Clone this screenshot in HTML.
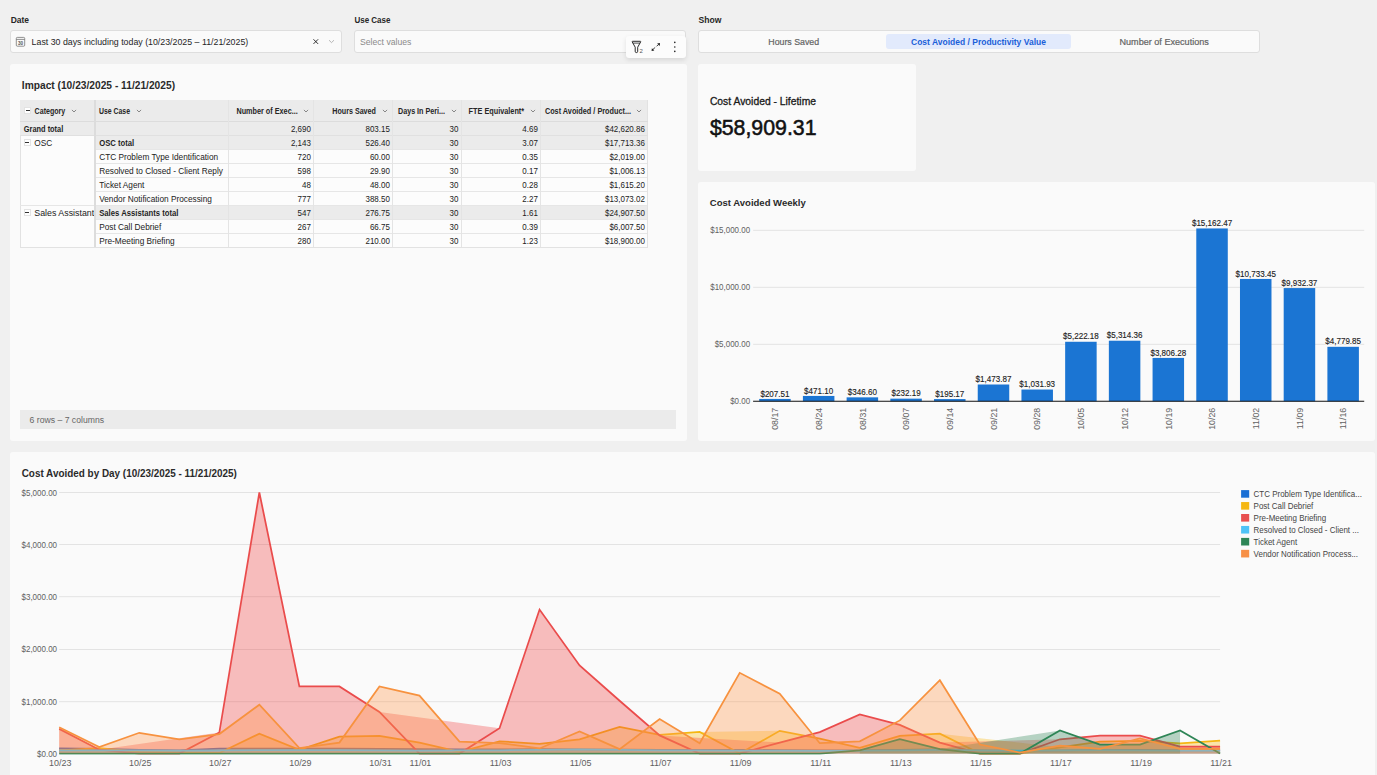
<!DOCTYPE html><html><head><meta charset="utf-8"><style>
*{margin:0;padding:0;box-sizing:border-box}
html,body{width:1377px;height:775px;overflow:hidden;background:#f0f0f0;font-family:"Liberation Sans", sans-serif;color:#1f1f1f}
.a{position:absolute}
.card{position:absolute;background:#fafafa;border-radius:3px}
.box{position:absolute;background:#fafafa;border:1px solid #dedede;border-radius:3px}
svg text{font-family:"Liberation Sans", sans-serif}
</style></head><body>
<div class="box" style="left:9.6px;top:30px;width:332.9px;height:22.6px;"></div>
<svg class="a" style="left:15px;top:36px" width="11" height="11" viewBox="0 0 11 11">
<rect x="1.3" y="1.4" width="8.4" height="8.8" rx="1" fill="none" stroke="#6e6e6e" stroke-width="0.75"/>
<line x1="1.3" y1="3.4" x2="9.7" y2="3.4" stroke="#6e6e6e" stroke-width="0.75"/>
<text x="5.5" y="8.9" font-size="4.6" font-weight="bold" text-anchor="middle" fill="#555">30</text>
</svg>
<svg class="a" style="left:312px;top:37.5px" width="8" height="8" viewBox="0 0 8 8">
<path d="M1.5 1.3 L6.1 5.9 M6.1 1.3 L1.5 5.9" stroke="#1a1a1a" stroke-width="0.9"/></svg>
<svg class="a" style="left:328.3px;top:38.9px" width="7" height="5" viewBox="0 0 7 5">
<path d="M1 1.2 L3.5 3.6 L6 1.2" stroke="#9a9a9a" stroke-width="0.7" fill="none"/></svg>
<div class="box" style="left:353.6px;top:30px;width:332.4px;height:22.6px;"></div>
<div class="box" style="left:698px;top:30px;width:562px;height:22.6px;"></div>
<div class="a" style="left:886px;top:34px;width:185px;height:15px;background:#e2eafc;border-radius:3px;"></div>
<div class="card" style="left:10px;top:64px;width:677px;height:376.5px;"></div>
<div class="card" style="left:698px;top:64px;width:218px;height:107px;border-radius:3px;"></div>
<div class="card" style="left:698px;top:182px;width:677px;height:258.5px;"></div>
<div class="card" style="left:10px;top:452px;width:1365px;height:340px;"></div>
<div class="a" style="left:626px;top:36px;width:60px;height:22px;background:#fcfcfc;border-radius:3px;box-shadow:0 2px 5px rgba(0,0,0,0.11);"></div>
<svg class="a" style="left:628px;top:38px" width="58" height="18" viewBox="0 0 58 18">
<path d="M4.6 3.3 H12.3 Q12.9 3.3 12.7 3.9 L9.7 9.2 V13.3 Q9.7 14.6 8.45 14.6 Q7.2 14.6 7.2 13.3 V9.2 L4.2 3.9 Q4.0 3.3 4.6 3.3 Z" fill="none" stroke="#1f1f1f" stroke-width="0.95" stroke-linejoin="round"/>
<line x1="4.9" y1="5.1" x2="12.0" y2="5.1" stroke="#1f1f1f" stroke-width="0.8"/>
<text x="11.6" y="15.3" font-size="6" fill="#555">2</text>
<path d="M24.8 11.6 L27.2 9.4 M28.6 8.2 L30.5 6.6" stroke="#1f1f1f" stroke-width="0.85"/>
<path d="M23.6 12.9 L23.9 10.3 L26.3 12.6 Z" fill="#1f1f1f"/>
<path d="M32.0 5.1 L31.7 8.0 L29.1 5.4 Z" fill="#1f1f1f"/>
<circle cx="46.8" cy="4.4" r="0.8" fill="#222"/><circle cx="46.8" cy="9.0" r="0.8" fill="#222"/><circle cx="46.8" cy="13.4" r="0.8" fill="#222"/>
</svg>
<div class="a" style="left:20px;top:100px;width:627.5px;height:21.3px;background:#ebebeb;"></div>
<div class="a" style="left:20px;top:121.3px;width:627.5px;height:14px;background:#ebebeb;"></div>
<div class="a" style="left:96px;top:135.3px;width:551.5px;height:14px;background:#ebebeb;"></div>
<div class="a" style="left:96px;top:149.3px;width:551.5px;height:14px;background:#fcfcfc;"></div>
<div class="a" style="left:96px;top:163.3px;width:551.5px;height:14px;background:#fcfcfc;"></div>
<div class="a" style="left:96px;top:177.3px;width:551.5px;height:14px;background:#fcfcfc;"></div>
<div class="a" style="left:96px;top:191.3px;width:551.5px;height:14px;background:#fcfcfc;"></div>
<div class="a" style="left:96px;top:205.3px;width:551.5px;height:14px;background:#ebebeb;"></div>
<div class="a" style="left:96px;top:219.3px;width:551.5px;height:14px;background:#fcfcfc;"></div>
<div class="a" style="left:96px;top:233.3px;width:551.5px;height:14px;background:#fcfcfc;"></div>
<div class="a" style="left:20px;top:135.3px;width:74px;height:112px;background:#fcfcfc;border-left:1px solid #e2e2e2;"></div>
<div class="a" style="left:96px;top:148.8px;width:551.5px;height:1px;background:#e6e6e6;"></div>
<div class="a" style="left:96px;top:162.8px;width:551.5px;height:1px;background:#e6e6e6;"></div>
<div class="a" style="left:96px;top:176.8px;width:551.5px;height:1px;background:#e6e6e6;"></div>
<div class="a" style="left:96px;top:190.8px;width:551.5px;height:1px;background:#e6e6e6;"></div>
<div class="a" style="left:96px;top:204.8px;width:551.5px;height:1px;background:#e6e6e6;"></div>
<div class="a" style="left:96px;top:218.8px;width:551.5px;height:1px;background:#e6e6e6;"></div>
<div class="a" style="left:96px;top:232.8px;width:551.5px;height:1px;background:#e6e6e6;"></div>
<div class="a" style="left:96px;top:246.8px;width:551.5px;height:1px;background:#e6e6e6;"></div>
<div class="a" style="left:20px;top:204.8px;width:74px;height:1px;background:#e6e6e6;"></div>
<div class="a" style="left:20px;top:246.8px;width:627.5px;height:1px;background:#e2e2e2;"></div>
<div class="a" style="left:647px;top:100px;width:1px;height:147.3px;background:#e2e2e2;"></div>
<div class="a" style="left:20px;top:120.8px;width:627.5px;height:1px;background:#dcdcdc;"></div>
<div class="a" style="left:20px;top:134.8px;width:627.5px;height:1px;background:#e0e0e0;"></div>
<div class="a" style="left:94px;top:100px;width:2px;height:147.3px;background:#dcdcdc;"></div>
<div class="a" style="left:228.0px;top:100px;width:1px;height:147.3px;background:#e4e4e4;"></div>
<div class="a" style="left:313.0px;top:100px;width:1px;height:147.3px;background:#e4e4e4;"></div>
<div class="a" style="left:392.0px;top:100px;width:1px;height:147.3px;background:#e4e4e4;"></div>
<div class="a" style="left:460.5px;top:100px;width:1px;height:147.3px;background:#e4e4e4;"></div>
<div class="a" style="left:540.0px;top:100px;width:1px;height:147.3px;background:#e4e4e4;"></div>
<div class="a" style="left:24px;top:107px;width:7px;height:7px;background:#fff;border:0.5px solid #e3e3e3;"></div>
<div class="a" style="left:25.5px;top:110.2px;width:4px;height:0.9px;background:#333;"></div>
<svg class="a" style="left:70.7px;top:109px" width="6" height="4" viewBox="0 0 6 4"><path d="M0.9 0.9 L3 3 L5.1 0.9" stroke="#666" stroke-width="0.75" fill="none"/></svg>
<svg class="a" style="left:135.5px;top:109px" width="6" height="4" viewBox="0 0 6 4"><path d="M0.9 0.9 L3 3 L5.1 0.9" stroke="#666" stroke-width="0.75" fill="none"/></svg>
<svg class="a" style="left:303px;top:109px" width="6" height="4" viewBox="0 0 6 4"><path d="M0.9 0.9 L3 3 L5.1 0.9" stroke="#666" stroke-width="0.75" fill="none"/></svg>
<svg class="a" style="left:381.6px;top:109px" width="6" height="4" viewBox="0 0 6 4"><path d="M0.9 0.9 L3 3 L5.1 0.9" stroke="#666" stroke-width="0.75" fill="none"/></svg>
<svg class="a" style="left:450.7px;top:109px" width="6" height="4" viewBox="0 0 6 4"><path d="M0.9 0.9 L3 3 L5.1 0.9" stroke="#666" stroke-width="0.75" fill="none"/></svg>
<svg class="a" style="left:529.5px;top:109px" width="6" height="4" viewBox="0 0 6 4"><path d="M0.9 0.9 L3 3 L5.1 0.9" stroke="#666" stroke-width="0.75" fill="none"/></svg>
<svg class="a" style="left:636.3px;top:109px" width="6" height="4" viewBox="0 0 6 4"><path d="M0.9 0.9 L3 3 L5.1 0.9" stroke="#666" stroke-width="0.75" fill="none"/></svg>
<div class="a" style="left:23.5px;top:138.8px;width:7px;height:7px;background:#fff;border:0.5px solid #e3e3e3;"></div>
<div class="a" style="left:25px;top:142.0px;width:4px;height:0.9px;background:#333;"></div>
<div class="a" style="left:23.5px;top:208.8px;width:7px;height:7px;background:#fff;border:0.5px solid #e3e3e3;"></div>
<div class="a" style="left:25px;top:212.0px;width:4px;height:0.9px;background:#333;"></div>
<div class="a" style="left:20px;top:410px;width:656px;height:19px;background:#ebebeb;"></div>
<svg class="a" style="left:0;top:0" width="1377" height="775" viewBox="0 0 1377 775">
<line x1="753.1" y1="230.30" x2="1364.2" y2="230.30" stroke="#e3e3e3" stroke-width="1"/>
<line x1="753.1" y1="287.30" x2="1364.2" y2="287.30" stroke="#e3e3e3" stroke-width="1"/>
<line x1="753.1" y1="344.30" x2="1364.2" y2="344.30" stroke="#e3e3e3" stroke-width="1"/>
<rect x="759.20" y="398.93" width="31.5" height="2.37" fill="#1b75d3"/>
<rect x="802.91" y="395.93" width="31.5" height="5.37" fill="#1b75d3"/>
<rect x="846.62" y="397.35" width="31.5" height="3.95" fill="#1b75d3"/>
<rect x="890.33" y="398.65" width="31.5" height="2.65" fill="#1b75d3"/>
<rect x="934.03" y="399.08" width="31.5" height="2.22" fill="#1b75d3"/>
<rect x="977.74" y="384.50" width="31.5" height="16.80" fill="#1b75d3"/>
<rect x="1021.45" y="389.54" width="31.5" height="11.76" fill="#1b75d3"/>
<rect x="1065.15" y="341.77" width="31.5" height="59.53" fill="#1b75d3"/>
<rect x="1108.86" y="340.72" width="31.5" height="60.58" fill="#1b75d3"/>
<rect x="1152.57" y="357.91" width="31.5" height="43.39" fill="#1b75d3"/>
<rect x="1196.28" y="228.45" width="31.5" height="172.85" fill="#1b75d3"/>
<rect x="1239.98" y="278.94" width="31.5" height="122.36" fill="#1b75d3"/>
<rect x="1283.69" y="288.07" width="31.5" height="113.23" fill="#1b75d3"/>
<rect x="1327.40" y="346.81" width="31.5" height="54.49" fill="#1b75d3"/>
<line x1="753.1" y1="401.3" x2="1364.2" y2="401.3" stroke="#111" stroke-width="1.1"/>
</svg>
<svg class="a" style="left:0;top:0" width="1377" height="775" viewBox="0 0 1377 775">
<line x1="59.2" y1="492.5" x2="1220.1" y2="492.5" stroke="#e3e3e3" stroke-width="1"/>
<line x1="59.2" y1="544.5" x2="1220.1" y2="544.5" stroke="#e3e3e3" stroke-width="1"/>
<line x1="59.2" y1="596.7" x2="1220.1" y2="596.7" stroke="#e3e3e3" stroke-width="1"/>
<line x1="59.2" y1="649.5" x2="1220.1" y2="649.5" stroke="#e3e3e3" stroke-width="1"/>
<line x1="59.2" y1="701.7" x2="1220.1" y2="701.7" stroke="#e3e3e3" stroke-width="1"/>
<defs><clipPath id="dclip"><rect x="50" y="470" width="1180" height="284.7"/></clipPath></defs><g clip-path="url(#dclip)">
<path d="M59.20,753.50 L59.20,748.38 L99.23,748.80 L139.26,749.85 L179.29,750.37 L219.32,748.54 L259.35,748.54 L299.38,748.54 L339.41,748.54 L379.44,748.80 L419.47,749.06 L459.50,749.32 L499.53,749.32 L539.56,749.06 L579.59,749.32 L619.62,749.59 L659.65,749.85 L699.68,749.85 L739.71,749.85 L779.74,750.11 L819.77,750.37 L859.80,750.37 L899.83,749.85 L939.86,749.32 L979.89,750.37 L1019.92,750.89 L1059.95,750.37 L1099.98,749.85 L1140.01,749.85 L1180.04,750.37 L1220.07,750.37 L1220.07,753.50 Z" fill="#1a6fd4" fill-opacity="0.34"/>
<path d="M59.20,748.38 L99.23,748.80 L139.26,749.85 L179.29,750.37 L219.32,748.54 L259.35,748.54 L299.38,748.54 L339.41,748.54 L379.44,748.80 L419.47,749.06 L459.50,749.32 L499.53,749.32 L539.56,749.06 L579.59,749.32 L619.62,749.59 L659.65,749.85 L699.68,749.85 L739.71,749.85 L779.74,750.11 L819.77,750.37 L859.80,750.37 L899.83,749.85 L939.86,749.32 L979.89,750.37 L1019.92,750.89 L1059.95,750.37 L1099.98,749.85 L1140.01,749.85 L1180.04,750.37 L1220.07,750.37" fill="none" stroke="#1a6fd4" stroke-width="1.75" stroke-linejoin="miter"/>
<path d="M59.20,753.50 L59.20,750.37 L99.23,748.02 L139.26,751.93 L179.29,752.46 L219.32,752.98 L259.35,733.72 L299.38,749.74 L339.41,736.69 L379.44,735.80 L419.47,742.59 L459.50,751.73 L499.53,741.29 L539.56,743.90 L579.59,739.30 L619.62,726.93 L659.65,734.76 L699.68,731.89 L779.74,730.85 L819.77,738.68 L859.80,747.81 L899.83,735.80 L939.86,733.72 L1059.95,747.29 L1099.98,741.70 L1140.01,740.92 L1180.04,743.27 L1220.07,740.55 L1220.07,753.50 Z" fill="#f9b80e" fill-opacity="0.34"/>
<path d="M59.20,750.37 L99.23,748.02 L139.26,751.93 L179.29,752.46 L219.32,752.98 L259.35,733.72 L299.38,749.74 L339.41,736.69 L379.44,735.80 L419.47,742.59 L459.50,751.73 L499.53,741.29 L539.56,743.90 L579.59,739.30 L619.62,726.93 L659.65,734.76 L699.68,731.89 L739.71,753.50 L779.74,730.85 L819.77,738.68 L859.80,747.81 L899.83,735.80 L939.86,733.72 L979.89,753.50 L1019.92,753.50 L1059.95,747.29 L1099.98,741.70 L1140.01,740.92 L1180.04,743.27 L1220.07,740.55" fill="none" stroke="#f5b713" stroke-width="1.75" stroke-linejoin="miter"/>
<path d="M59.20,753.50 L59.20,728.86 L99.23,749.74 L219.32,732.52 L259.35,492.50 L299.38,686.48 L339.41,686.48 L379.44,711.90 L499.53,728.24 L539.56,609.53 L579.59,665.49 L619.62,700.78 L659.65,735.39 L779.74,742.59 L819.77,732.15 L859.80,714.51 L899.83,724.95 L939.86,742.59 L1059.95,739.30 L1099.98,735.65 L1140.01,735.65 L1180.04,746.51 L1220.07,746.51 L1220.07,753.50 Z" fill="#f14444" fill-opacity="0.34"/>
<path d="M59.20,728.86 L99.23,749.74 L139.26,753.50 L179.29,753.50 L219.32,732.52 L259.35,492.50 L299.38,686.48 L339.41,686.48 L379.44,711.90 L419.47,753.50 L459.50,753.50 L499.53,728.24 L539.56,609.53 L579.59,665.49 L619.62,700.78 L659.65,735.39 L699.68,753.50 L739.71,753.50 L779.74,742.59 L819.77,732.15 L859.80,714.51 L899.83,724.95 L939.86,742.59 L979.89,753.50 L1019.92,753.50 L1059.95,739.30 L1099.98,735.65 L1140.01,735.65 L1180.04,746.51 L1220.07,746.51" fill="none" stroke="#ea4c4c" stroke-width="1.75" stroke-linejoin="miter"/>
<path d="M59.20,753.50 L59.20,750.37 L99.23,750.26 L139.26,750.47 L179.29,750.63 L219.32,750.37 L259.35,750.11 L299.38,750.11 L339.41,750.11 L379.44,750.37 L419.47,750.63 L459.50,750.47 L499.53,750.26 L539.56,749.85 L579.59,749.32 L619.62,749.85 L659.65,750.26 L699.68,750.47 L739.71,750.63 L779.74,750.63 L819.77,750.79 L859.80,750.63 L899.83,750.26 L939.86,749.95 L979.89,750.26 L1019.92,750.63 L1059.95,750.37 L1099.98,750.05 L1140.01,750.37 L1180.04,750.63 L1220.07,750.63 L1220.07,753.50 Z" fill="#4fc3f7" fill-opacity="0.34"/>
<path d="M59.20,750.37 L99.23,750.26 L139.26,750.47 L179.29,750.63 L219.32,750.37 L259.35,750.11 L299.38,750.11 L339.41,750.11 L379.44,750.37 L419.47,750.63 L459.50,750.47 L499.53,750.26 L539.56,749.85 L579.59,749.32 L619.62,749.85 L659.65,750.26 L699.68,750.47 L739.71,750.63 L779.74,750.63 L819.77,750.79 L859.80,750.63 L899.83,750.26 L939.86,749.95 L979.89,750.26 L1019.92,750.63 L1059.95,750.37 L1099.98,750.05 L1140.01,750.37 L1180.04,750.63 L1220.07,750.63" fill="none" stroke="#4fc3f7" stroke-width="1.75" stroke-linejoin="miter"/>
<path d="M859.80,753.50 L859.80,750.42 L899.83,739.04 L939.86,749.12 L1059.95,730.53 L1099.98,744.57 L1140.01,744.57 L1180.04,730.53 L1180.04,753.50 Z" fill="#2e8556" fill-opacity="0.34"/>
<path d="M59.20,753.50 L99.23,753.50 L139.26,753.50 L179.29,753.50 L219.32,753.50 L259.35,753.50 L299.38,753.50 L339.41,753.50 L379.44,753.50 L419.47,753.50 L459.50,753.50 L499.53,753.50 L539.56,753.50 L579.59,753.50 L619.62,753.50 L659.65,753.50 L699.68,753.50 L739.71,753.50 L779.74,753.50 L819.77,753.50 L859.80,750.42 L899.83,739.04 L939.86,749.12 L979.89,753.50 L1019.92,753.50 L1059.95,730.53 L1099.98,744.57 L1140.01,744.57 L1180.04,730.53 L1220.07,753.50" fill="none" stroke="#2e8556" stroke-width="1.75" stroke-linejoin="miter"/>
<path d="M59.20,753.50 L59.20,727.24 L99.23,747.13 L139.26,732.78 L179.29,739.30 L219.32,734.08 L259.35,704.75 L299.38,748.07 L339.41,742.59 L379.44,686.48 L419.47,695.61 L459.50,741.55 L499.53,743.06 L539.56,748.44 L579.59,731.47 L619.62,749.12 L659.65,719.10 L699.68,743.22 L739.71,672.80 L779.74,693.63 L819.77,743.22 L859.80,741.29 L899.83,720.41 L939.86,680.21 L979.89,744.52 L1019.92,752.56 L1059.95,745.67 L1099.98,748.85 L1140.01,738.52 L1180.04,748.85 L1220.07,748.85 L1220.07,753.50 Z" fill="#ff9649" fill-opacity="0.34"/>
<path d="M59.20,727.24 L99.23,747.13 L139.26,732.78 L179.29,739.30 L219.32,734.08 L259.35,704.75 L299.38,748.07 L339.41,742.59 L379.44,686.48 L419.47,695.61 L459.50,741.55 L499.53,743.06 L539.56,748.44 L579.59,731.47 L619.62,749.12 L659.65,719.10 L699.68,743.22 L739.71,672.80 L779.74,693.63 L819.77,743.22 L859.80,741.29 L899.83,720.41 L939.86,680.21 L979.89,744.52 L1019.92,752.56 L1059.95,745.67 L1099.98,748.85 L1140.01,738.52 L1180.04,748.85 L1220.07,748.85" fill="none" stroke="#f7923f" stroke-width="1.75" stroke-linejoin="miter"/>
</g>
<rect x="1241.1" y="490.10" width="8.1" height="7.6" fill="#1a6fd4"/>
<rect x="1241.1" y="502.05" width="8.1" height="7.6" fill="#f5b713"/>
<rect x="1241.1" y="514.00" width="8.1" height="7.6" fill="#e8504f"/>
<rect x="1241.1" y="525.95" width="8.1" height="7.6" fill="#4fc3f7"/>
<rect x="1241.1" y="537.90" width="8.1" height="7.6" fill="#2e8556"/>
<rect x="1241.1" y="549.85" width="8.1" height="7.6" fill="#f79046"/>
</svg>
<svg class="a" style="left:0;top:0" width="1377" height="775" viewBox="0 0 1377 775"><defs><clipPath id="catclip"><rect x="20" y="200" width="74" height="30"/></clipPath></defs><text transform="translate(10.66,22.60) scale(0.9538,1)" font-size="8.9" font-weight="bold" fill="#262626">Date</text>
<text transform="translate(31.60,44.90) scale(0.9907,1)" font-size="8.9" fill="#262626">Last 30 days including today (10/23/2025 – 11/21/2025)</text>
<text transform="translate(354.40,22.60) scale(0.9008,1)" font-size="8.9" font-weight="bold" fill="#262626">Use Case</text>
<text transform="translate(360.00,44.90) scale(0.9710,1)" font-size="8.9" fill="#8a8a8a">Select values</text>
<text transform="translate(698.50,22.60) scale(0.9649,1)" font-size="8.9" font-weight="bold" fill="#262626">Show</text>
<text transform="translate(768.30,45.20) scale(0.9783,1)" font-size="9.0" fill="#646464" stroke="#646464" stroke-width="0.2">Hours Saved</text>
<text transform="translate(911.00,45.20) scale(0.9450,1)" font-size="9.0" font-weight="bold" fill="#1b5fd9">Cost Avoided / Productivity Value</text>
<text transform="translate(1119.50,45.20) scale(1.0108,1)" font-size="9.0" fill="#646464" stroke="#646464" stroke-width="0.2">Number of Executions</text>
<text transform="translate(21.80,88.60) scale(0.9551,1)" font-size="10.7" font-weight="bold" fill="#2a2a2a">Impact (10/23/2025 - 11/21/2025)</text>
<text transform="translate(34.60,113.90) scale(0.8236,1)" font-size="8.6" font-weight="bold" fill="#262626">Category</text>
<text transform="translate(99.00,113.90) scale(0.8031,1)" font-size="8.6" font-weight="bold" fill="#262626">Use Case</text>
<text transform="translate(236.40,113.90) scale(0.8452,1)" font-size="8.6" font-weight="bold" fill="#262626">Number of Exec...</text>
<text transform="translate(332.30,113.90) scale(0.8312,1)" font-size="8.6" font-weight="bold" fill="#262626">Hours Saved</text>
<text transform="translate(398.00,113.90) scale(0.8350,1)" font-size="8.6" font-weight="bold" fill="#262626">Days In Peri...</text>
<text transform="translate(468.60,113.90) scale(0.8493,1)" font-size="8.6" font-weight="bold" fill="#262626">FTE Equivalent*</text>
<text transform="translate(544.90,113.90) scale(0.8473,1)" font-size="8.6" font-weight="bold" fill="#262626">Cost Avoided / Product...</text>
<text transform="translate(23.80,131.50) scale(0.8612,1)" font-size="8.6" font-weight="bold" fill="#1f1f1f">Grand total</text>
<text transform="translate(310.90,131.50) scale(0.8600,1)" font-size="9.3" text-anchor="end" fill="#222">2,690</text>
<text transform="translate(389.90,131.50) scale(0.8600,1)" font-size="9.3" text-anchor="end" fill="#222">803.15</text>
<text transform="translate(458.40,131.50) scale(0.8600,1)" font-size="9.3" text-anchor="end" fill="#222">30</text>
<text transform="translate(537.90,131.50) scale(0.8600,1)" font-size="9.3" text-anchor="end" fill="#222">4.69</text>
<text transform="translate(644.90,131.50) scale(0.8600,1)" font-size="9.3" text-anchor="end" fill="#222">$42,620.86</text>
<text transform="translate(34.30,145.50) scale(0.8900,1)" font-size="9.3" fill="#222">OSC</text>
<text transform="translate(99.20,145.50) scale(0.8956,1)" font-size="8.6" font-weight="bold" fill="#1f1f1f">OSC total</text>
<text transform="translate(310.90,145.50) scale(0.8600,1)" font-size="9.3" text-anchor="end" fill="#222">2,143</text>
<text transform="translate(389.90,145.50) scale(0.8600,1)" font-size="9.3" text-anchor="end" fill="#222">526.40</text>
<text transform="translate(458.40,145.50) scale(0.8600,1)" font-size="9.3" text-anchor="end" fill="#222">30</text>
<text transform="translate(537.90,145.50) scale(0.8600,1)" font-size="9.3" text-anchor="end" fill="#222">3.07</text>
<text transform="translate(644.90,145.50) scale(0.8600,1)" font-size="9.3" text-anchor="end" fill="#222">$17,713.36</text>
<text transform="translate(99.20,159.50) scale(0.8900,1)" font-size="9.3" fill="#222">CTC Problem Type Identification</text>
<text transform="translate(310.90,159.50) scale(0.8600,1)" font-size="9.3" text-anchor="end" fill="#222">720</text>
<text transform="translate(389.90,159.50) scale(0.8600,1)" font-size="9.3" text-anchor="end" fill="#222">60.00</text>
<text transform="translate(458.40,159.50) scale(0.8600,1)" font-size="9.3" text-anchor="end" fill="#222">30</text>
<text transform="translate(537.90,159.50) scale(0.8600,1)" font-size="9.3" text-anchor="end" fill="#222">0.35</text>
<text transform="translate(644.90,159.50) scale(0.8600,1)" font-size="9.3" text-anchor="end" fill="#222">$2,019.00</text>
<text transform="translate(99.20,173.50) scale(0.8900,1)" font-size="9.3" fill="#222">Resolved to Closed - Client Reply</text>
<text transform="translate(310.90,173.50) scale(0.8600,1)" font-size="9.3" text-anchor="end" fill="#222">598</text>
<text transform="translate(389.90,173.50) scale(0.8600,1)" font-size="9.3" text-anchor="end" fill="#222">29.90</text>
<text transform="translate(458.40,173.50) scale(0.8600,1)" font-size="9.3" text-anchor="end" fill="#222">30</text>
<text transform="translate(537.90,173.50) scale(0.8600,1)" font-size="9.3" text-anchor="end" fill="#222">0.17</text>
<text transform="translate(644.90,173.50) scale(0.8600,1)" font-size="9.3" text-anchor="end" fill="#222">$1,006.13</text>
<text transform="translate(99.20,187.50) scale(0.8900,1)" font-size="9.3" fill="#222">Ticket Agent</text>
<text transform="translate(310.90,187.50) scale(0.8600,1)" font-size="9.3" text-anchor="end" fill="#222">48</text>
<text transform="translate(389.90,187.50) scale(0.8600,1)" font-size="9.3" text-anchor="end" fill="#222">48.00</text>
<text transform="translate(458.40,187.50) scale(0.8600,1)" font-size="9.3" text-anchor="end" fill="#222">30</text>
<text transform="translate(537.90,187.50) scale(0.8600,1)" font-size="9.3" text-anchor="end" fill="#222">0.28</text>
<text transform="translate(644.90,187.50) scale(0.8600,1)" font-size="9.3" text-anchor="end" fill="#222">$1,615.20</text>
<text transform="translate(99.20,201.50) scale(0.8900,1)" font-size="9.3" fill="#222">Vendor Notification Processing</text>
<text transform="translate(310.90,201.50) scale(0.8600,1)" font-size="9.3" text-anchor="end" fill="#222">777</text>
<text transform="translate(389.90,201.50) scale(0.8600,1)" font-size="9.3" text-anchor="end" fill="#222">388.50</text>
<text transform="translate(458.40,201.50) scale(0.8600,1)" font-size="9.3" text-anchor="end" fill="#222">30</text>
<text transform="translate(537.90,201.50) scale(0.8600,1)" font-size="9.3" text-anchor="end" fill="#222">2.27</text>
<text transform="translate(644.90,201.50) scale(0.8600,1)" font-size="9.3" text-anchor="end" fill="#222">$13,073.02</text>
<g clip-path="url(#catclip)"><text transform="translate(34.30,215.50) scale(0.9500,1)" font-size="9.3" fill="#222">Sales Assistants</text></g>
<text transform="translate(99.20,215.50) scale(0.8956,1)" font-size="8.6" font-weight="bold" fill="#1f1f1f">Sales Assistants total</text>
<text transform="translate(310.90,215.50) scale(0.8600,1)" font-size="9.3" text-anchor="end" fill="#222">547</text>
<text transform="translate(389.90,215.50) scale(0.8600,1)" font-size="9.3" text-anchor="end" fill="#222">276.75</text>
<text transform="translate(458.40,215.50) scale(0.8600,1)" font-size="9.3" text-anchor="end" fill="#222">30</text>
<text transform="translate(537.90,215.50) scale(0.8600,1)" font-size="9.3" text-anchor="end" fill="#222">1.61</text>
<text transform="translate(644.90,215.50) scale(0.8600,1)" font-size="9.3" text-anchor="end" fill="#222">$24,907.50</text>
<text transform="translate(99.20,229.50) scale(0.8900,1)" font-size="9.3" fill="#222">Post Call Debrief</text>
<text transform="translate(310.90,229.50) scale(0.8600,1)" font-size="9.3" text-anchor="end" fill="#222">267</text>
<text transform="translate(389.90,229.50) scale(0.8600,1)" font-size="9.3" text-anchor="end" fill="#222">66.75</text>
<text transform="translate(458.40,229.50) scale(0.8600,1)" font-size="9.3" text-anchor="end" fill="#222">30</text>
<text transform="translate(537.90,229.50) scale(0.8600,1)" font-size="9.3" text-anchor="end" fill="#222">0.39</text>
<text transform="translate(644.90,229.50) scale(0.8600,1)" font-size="9.3" text-anchor="end" fill="#222">$6,007.50</text>
<text transform="translate(99.20,243.50) scale(0.8900,1)" font-size="9.3" fill="#222">Pre-Meeting Briefing</text>
<text transform="translate(310.90,243.50) scale(0.8600,1)" font-size="9.3" text-anchor="end" fill="#222">280</text>
<text transform="translate(389.90,243.50) scale(0.8600,1)" font-size="9.3" text-anchor="end" fill="#222">210.00</text>
<text transform="translate(458.40,243.50) scale(0.8600,1)" font-size="9.3" text-anchor="end" fill="#222">30</text>
<text transform="translate(537.90,243.50) scale(0.8600,1)" font-size="9.3" text-anchor="end" fill="#222">1.23</text>
<text transform="translate(644.90,243.50) scale(0.8600,1)" font-size="9.3" text-anchor="end" fill="#222">$18,900.00</text>
<text transform="translate(29.60,422.80) scale(0.9827,1)" font-size="8.8" fill="#666">6 rows – 7 columns</text>
<text transform="translate(709.90,105.30) scale(1.0143,1)" font-size="10.2" fill="#1a1a1a" stroke="#1a1a1a" stroke-width="0.3">Cost Avoided - Lifetime</text>
<text transform="translate(709.90,134.90) scale(0.9603,1)" font-size="22.2" fill="#111" stroke="#111" stroke-width="0.55">$58,909.31</text>
<text transform="translate(709.80,206.20) scale(0.9731,1)" font-size="9.8" font-weight="bold" fill="#2a2a2a">Cost Avoided Weekly</text>
<text transform="translate(21.70,476.70) scale(0.9447,1)" font-size="10.5" font-weight="bold" fill="#2a2a2a">Cost Avoided by Day (10/23/2025 - 11/21/2025)</text>
<text transform="translate(750.10,233.00) scale(0.9600,1)" font-size="8.3" text-anchor="end" fill="#616161">$15,000.00</text>
<text transform="translate(750.10,290.00) scale(0.9600,1)" font-size="8.3" text-anchor="end" fill="#616161">$10,000.00</text>
<text transform="translate(750.10,347.00) scale(0.9600,1)" font-size="8.3" text-anchor="end" fill="#616161">$5,000.00</text>
<text transform="translate(750.10,404.00) scale(0.9600,1)" font-size="8.3" text-anchor="end" fill="#616161">$0.00</text>
<text transform="translate(774.95,396.53) scale(0.8300,1)" font-size="9.7" text-anchor="middle" fill="#fafafa" stroke="#fafafa" stroke-width="1.6">$207.51</text>
<text transform="translate(774.95,396.53) scale(0.8300,1)" font-size="9.7" text-anchor="middle" fill="#1f1f1f" stroke="#1f1f1f" stroke-width="0.15">$207.51</text>
<text transform="translate(778.15,407.8) rotate(-90)" font-size="8.8" fill="#616161" text-anchor="end">08/17</text>
<text transform="translate(818.66,393.53) scale(0.8300,1)" font-size="9.7" text-anchor="middle" fill="#fafafa" stroke="#fafafa" stroke-width="1.6">$471.10</text>
<text transform="translate(818.66,393.53) scale(0.8300,1)" font-size="9.7" text-anchor="middle" fill="#1f1f1f" stroke="#1f1f1f" stroke-width="0.15">$471.10</text>
<text transform="translate(821.86,407.8) rotate(-90)" font-size="8.8" fill="#616161" text-anchor="end">08/24</text>
<text transform="translate(862.37,394.95) scale(0.8300,1)" font-size="9.7" text-anchor="middle" fill="#fafafa" stroke="#fafafa" stroke-width="1.6">$346.60</text>
<text transform="translate(862.37,394.95) scale(0.8300,1)" font-size="9.7" text-anchor="middle" fill="#1f1f1f" stroke="#1f1f1f" stroke-width="0.15">$346.60</text>
<text transform="translate(865.57,407.8) rotate(-90)" font-size="8.8" fill="#616161" text-anchor="end">08/31</text>
<text transform="translate(906.08,396.25) scale(0.8300,1)" font-size="9.7" text-anchor="middle" fill="#fafafa" stroke="#fafafa" stroke-width="1.6">$232.19</text>
<text transform="translate(906.08,396.25) scale(0.8300,1)" font-size="9.7" text-anchor="middle" fill="#1f1f1f" stroke="#1f1f1f" stroke-width="0.15">$232.19</text>
<text transform="translate(909.28,407.8) rotate(-90)" font-size="8.8" fill="#616161" text-anchor="end">09/07</text>
<text transform="translate(949.78,396.68) scale(0.8300,1)" font-size="9.7" text-anchor="middle" fill="#fafafa" stroke="#fafafa" stroke-width="1.6">$195.17</text>
<text transform="translate(949.78,396.68) scale(0.8300,1)" font-size="9.7" text-anchor="middle" fill="#1f1f1f" stroke="#1f1f1f" stroke-width="0.15">$195.17</text>
<text transform="translate(952.98,407.8) rotate(-90)" font-size="8.8" fill="#616161" text-anchor="end">09/14</text>
<text transform="translate(993.49,382.10) scale(0.8300,1)" font-size="9.7" text-anchor="middle" fill="#fafafa" stroke="#fafafa" stroke-width="1.6">$1,473.87</text>
<text transform="translate(993.49,382.10) scale(0.8300,1)" font-size="9.7" text-anchor="middle" fill="#1f1f1f" stroke="#1f1f1f" stroke-width="0.15">$1,473.87</text>
<text transform="translate(996.69,407.8) rotate(-90)" font-size="8.8" fill="#616161" text-anchor="end">09/21</text>
<text transform="translate(1037.20,387.14) scale(0.8300,1)" font-size="9.7" text-anchor="middle" fill="#fafafa" stroke="#fafafa" stroke-width="1.6">$1,031.93</text>
<text transform="translate(1037.20,387.14) scale(0.8300,1)" font-size="9.7" text-anchor="middle" fill="#1f1f1f" stroke="#1f1f1f" stroke-width="0.15">$1,031.93</text>
<text transform="translate(1040.40,407.8) rotate(-90)" font-size="8.8" fill="#616161" text-anchor="end">09/28</text>
<text transform="translate(1080.90,339.37) scale(0.8300,1)" font-size="9.7" text-anchor="middle" fill="#fafafa" stroke="#fafafa" stroke-width="1.6">$5,222.18</text>
<text transform="translate(1080.90,339.37) scale(0.8300,1)" font-size="9.7" text-anchor="middle" fill="#1f1f1f" stroke="#1f1f1f" stroke-width="0.15">$5,222.18</text>
<text transform="translate(1084.10,407.8) rotate(-90)" font-size="8.8" fill="#616161" text-anchor="end">10/05</text>
<text transform="translate(1124.61,338.32) scale(0.8300,1)" font-size="9.7" text-anchor="middle" fill="#fafafa" stroke="#fafafa" stroke-width="1.6">$5,314.36</text>
<text transform="translate(1124.61,338.32) scale(0.8300,1)" font-size="9.7" text-anchor="middle" fill="#1f1f1f" stroke="#1f1f1f" stroke-width="0.15">$5,314.36</text>
<text transform="translate(1127.81,407.8) rotate(-90)" font-size="8.8" fill="#616161" text-anchor="end">10/12</text>
<text transform="translate(1168.32,355.51) scale(0.8300,1)" font-size="9.7" text-anchor="middle" fill="#fafafa" stroke="#fafafa" stroke-width="1.6">$3,806.28</text>
<text transform="translate(1168.32,355.51) scale(0.8300,1)" font-size="9.7" text-anchor="middle" fill="#1f1f1f" stroke="#1f1f1f" stroke-width="0.15">$3,806.28</text>
<text transform="translate(1171.52,407.8) rotate(-90)" font-size="8.8" fill="#616161" text-anchor="end">10/19</text>
<text transform="translate(1212.03,226.05) scale(0.8300,1)" font-size="9.7" text-anchor="middle" fill="#fafafa" stroke="#fafafa" stroke-width="1.6">$15,162.47</text>
<text transform="translate(1212.03,226.05) scale(0.8300,1)" font-size="9.7" text-anchor="middle" fill="#1f1f1f" stroke="#1f1f1f" stroke-width="0.15">$15,162.47</text>
<text transform="translate(1215.23,407.8) rotate(-90)" font-size="8.8" fill="#616161" text-anchor="end">10/26</text>
<text transform="translate(1255.73,276.54) scale(0.8300,1)" font-size="9.7" text-anchor="middle" fill="#fafafa" stroke="#fafafa" stroke-width="1.6">$10,733.45</text>
<text transform="translate(1255.73,276.54) scale(0.8300,1)" font-size="9.7" text-anchor="middle" fill="#1f1f1f" stroke="#1f1f1f" stroke-width="0.15">$10,733.45</text>
<text transform="translate(1258.93,407.8) rotate(-90)" font-size="8.8" fill="#616161" text-anchor="end">11/02</text>
<text transform="translate(1299.44,285.67) scale(0.8300,1)" font-size="9.7" text-anchor="middle" fill="#fafafa" stroke="#fafafa" stroke-width="1.6">$9,932.37</text>
<text transform="translate(1299.44,285.67) scale(0.8300,1)" font-size="9.7" text-anchor="middle" fill="#1f1f1f" stroke="#1f1f1f" stroke-width="0.15">$9,932.37</text>
<text transform="translate(1302.64,407.8) rotate(-90)" font-size="8.8" fill="#616161" text-anchor="end">11/09</text>
<text transform="translate(1343.15,344.41) scale(0.8300,1)" font-size="9.7" text-anchor="middle" fill="#fafafa" stroke="#fafafa" stroke-width="1.6">$4,779.85</text>
<text transform="translate(1343.15,344.41) scale(0.8300,1)" font-size="9.7" text-anchor="middle" fill="#1f1f1f" stroke="#1f1f1f" stroke-width="0.15">$4,779.85</text>
<text transform="translate(1346.35,407.8) rotate(-90)" font-size="8.8" fill="#616161" text-anchor="end">11/16</text>
<text transform="translate(57.05,495.70) scale(0.9300,1)" font-size="8.6" text-anchor="end" fill="#616161">$5,000.00</text>
<text transform="translate(57.05,547.90) scale(0.9300,1)" font-size="8.6" text-anchor="end" fill="#616161">$4,000.00</text>
<text transform="translate(57.05,600.10) scale(0.9300,1)" font-size="8.6" text-anchor="end" fill="#616161">$3,000.00</text>
<text transform="translate(57.05,652.30) scale(0.9300,1)" font-size="8.6" text-anchor="end" fill="#616161">$2,000.00</text>
<text transform="translate(57.05,704.50) scale(0.9300,1)" font-size="8.6" text-anchor="end" fill="#616161">$1,000.00</text>
<text transform="translate(57.05,756.70) scale(0.9300,1)" font-size="8.6" text-anchor="end" fill="#616161">$0.00</text>
<text transform="translate(60.20,765.90) scale(1.0300,1)" font-size="8.7" text-anchor="middle" fill="#5f5f5f">10/23</text>
<text transform="translate(140.26,765.90) scale(1.0300,1)" font-size="8.7" text-anchor="middle" fill="#5f5f5f">10/25</text>
<text transform="translate(220.32,765.90) scale(1.0300,1)" font-size="8.7" text-anchor="middle" fill="#5f5f5f">10/27</text>
<text transform="translate(300.38,765.90) scale(1.0300,1)" font-size="8.7" text-anchor="middle" fill="#5f5f5f">10/29</text>
<text transform="translate(380.44,765.90) scale(1.0300,1)" font-size="8.7" text-anchor="middle" fill="#5f5f5f">10/31</text>
<text transform="translate(420.47,765.90) scale(1.0300,1)" font-size="8.7" text-anchor="middle" fill="#5f5f5f">11/01</text>
<text transform="translate(500.53,765.90) scale(1.0300,1)" font-size="8.7" text-anchor="middle" fill="#5f5f5f">11/03</text>
<text transform="translate(580.59,765.90) scale(1.0300,1)" font-size="8.7" text-anchor="middle" fill="#5f5f5f">11/05</text>
<text transform="translate(660.65,765.90) scale(1.0300,1)" font-size="8.7" text-anchor="middle" fill="#5f5f5f">11/07</text>
<text transform="translate(740.71,765.90) scale(1.0300,1)" font-size="8.7" text-anchor="middle" fill="#5f5f5f">11/09</text>
<text transform="translate(820.77,765.90) scale(1.0300,1)" font-size="8.7" text-anchor="middle" fill="#5f5f5f">11/11</text>
<text transform="translate(900.83,765.90) scale(1.0300,1)" font-size="8.7" text-anchor="middle" fill="#5f5f5f">11/13</text>
<text transform="translate(980.89,765.90) scale(1.0300,1)" font-size="8.7" text-anchor="middle" fill="#5f5f5f">11/15</text>
<text transform="translate(1060.95,765.90) scale(1.0300,1)" font-size="8.7" text-anchor="middle" fill="#5f5f5f">11/17</text>
<text transform="translate(1141.01,765.90) scale(1.0300,1)" font-size="8.7" text-anchor="middle" fill="#5f5f5f">11/19</text>
<text transform="translate(1221.07,765.90) scale(1.0300,1)" font-size="8.7" text-anchor="middle" fill="#5f5f5f">11/21</text>
<text transform="translate(1253.60,497.00) scale(0.9269,1)" font-size="8.6" fill="#444">CTC Problem Type Identifica...</text>
<text transform="translate(1253.60,508.95) scale(0.9269,1)" font-size="8.6" fill="#444">Post Call Debrief</text>
<text transform="translate(1253.60,520.90) scale(0.9269,1)" font-size="8.6" fill="#444">Pre-Meeting Briefing</text>
<text transform="translate(1253.60,532.85) scale(0.9269,1)" font-size="8.6" fill="#444">Resolved to Closed - Client ...</text>
<text transform="translate(1253.60,544.80) scale(0.9269,1)" font-size="8.6" fill="#444">Ticket Agent</text>
<text transform="translate(1253.60,556.75) scale(0.9269,1)" font-size="8.6" fill="#444">Vendor Notification Process...</text></svg>
</body></html>
